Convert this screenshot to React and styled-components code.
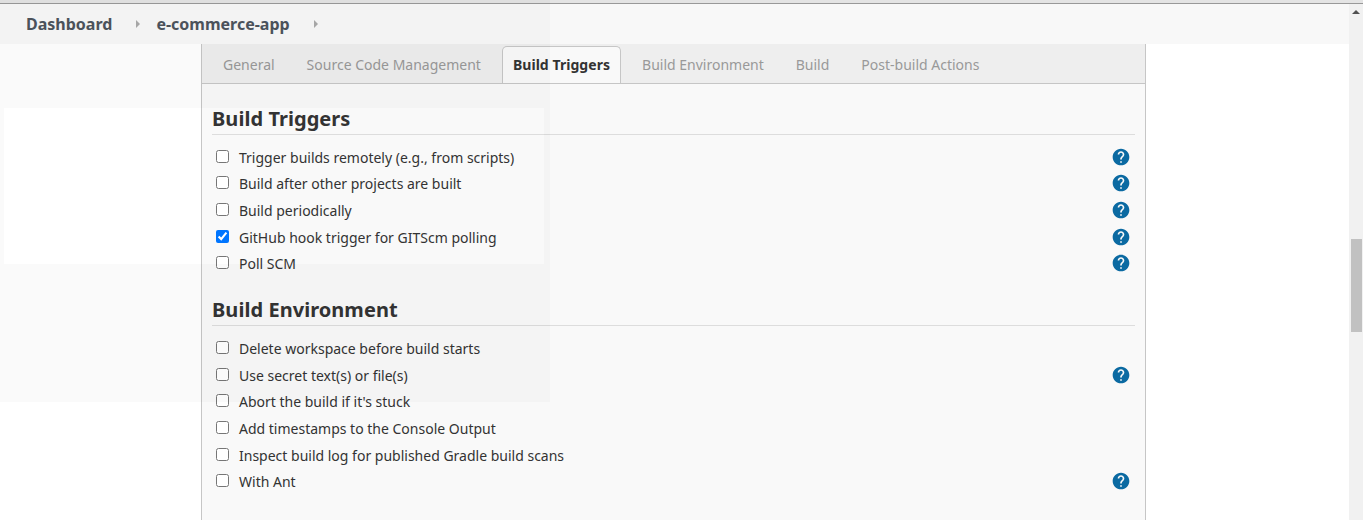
import React from "react";
import styled, { createGlobalStyle } from "styled-components";
import { MdHelp } from "react-icons/md";

const GlobalStyle = createGlobalStyle`
  *, *::before, *::after { box-sizing: border-box; }
  body {
    margin: 0;
    overflow: hidden;
    background: #fff;
    color: #333;
    font-family: "Noto Sans", "Open Sans", sans-serif;
    font-size: 14px;
  }
`;

const Page = styled.div`
  position: relative;
  display: flex;
  flex-direction: column;
  height: 520px;
  overflow: hidden;
`;

const WindowEdge = styled.div`
  flex: none;
  height: 4px;
  background: #e4e4e4;
  border-bottom: 1px solid #999;
`;

const Viewport = styled.div`
  flex: 1;
  display: flex;
  min-height: 0;
`;

const Main = styled.div`
  flex: 1;
  display: flex;
  flex-direction: column;
`;

const Breadcrumbs = styled.nav`
  flex: none;
  display: flex;
  align-items: center;
  height: 40px;
  padding-left: 26px;
  background: #f8f8f8;
`;

const Crumb = styled.span`
  color: #4d545d;
  font-size: 16px;
  font-weight: 700;
  line-height: 22px;
`;

const CrumbArrow = styled.span`
  margin: 0 16px 0 24px;
  border-left: 4px solid #aaa;
  border-top: 4px solid transparent;
  border-bottom: 4px solid transparent;
`;

const ConfigPanel = styled.div`
  flex: 1;
  width: 945px;
  margin-left: 201px;
  background: #f9f9f9;
  border: solid #c6c6c6;
  border-width: 0 1px;
`;

const TabBar = styled.div`
  display: flex;
  align-items: flex-end;
  height: 40px;
  padding-left: 10px;
  background: #eee;
  border-bottom: 1px solid #c6c6c6;
`;

const Tab = styled.div`
  height: 37px;
  margin-right: 10px;
  padding: 0 10px;
  line-height: 35px;
  border: 1px solid transparent;
  border-bottom: 0;
  border-radius: 5px 5px 0 0;
  white-space: nowrap;
  color: ${(p) => (p.$active ? "#333" : "#999")};
  font-weight: ${(p) => (p.$active ? 700 : 400)};
  letter-spacing: ${(p) => (p.$active ? "0.05px" : "normal")};
  background: ${(p) => (p.$active ? "#f9f9f9" : "transparent")};
  border-color: ${(p) => (p.$active ? "#c6c6c6" : "transparent")};
`;

const Section = styled.section`
  padding: 20px 10px 0;
  & + & { padding-top: 18.25px; }
`;

const SectionTitle = styled.h2`
  height: 31px;
  margin: 0 0 8.75px;
  font-size: 20px;
  font-weight: 700;
  line-height: 30px;
  letter-spacing: 0.05px;
  border-bottom: 1px solid #ddd;
`;

const Option = styled.label`
  display: flex;
  align-items: flex-start;
  height: 26.66px;
  padding: 0 4px;
`;

const Checkbox = styled.input`
  flex: none;
  width: 13px;
  height: 13px;
  margin: 6px 10px 0 0;
`;

const OptionText = styled.span`
  flex: 1;
  line-height: 19px;
  padding-top: 4px;
`;

const HelpIcon = styled(MdHelp)`
  width: 20px;
  height: 20px;
  margin-top: 3px;
  color: #0b6aa2;
`;

const ScrollTrack = styled.div`
  flex: none;
  display: flex;
  flex-direction: column;
  align-items: center;
  width: 14px;
  padding-top: 6px;
  background: #f1f1f1;
`;

const ScrollArrow = styled.span`
  border-bottom: 4px solid #505050;
  border-left: 4px solid transparent;
  border-right: 4px solid transparent;
`;

const ScrollThumb = styled.div`
  width: 11px;
  height: 93px;
  margin-top: 225px;
  margin-left: 1px;
  background: #c1c1c1;
`;

/* Fading capture frame with a clear window in its middle. */
const CaptureFrame = styled.div`
  position: absolute;
  top: 0;
  left: 0;
  width: 550px;
  height: 402px;
  border: solid rgba(0, 0, 0, 0.021);
  border-width: 108px 6px 138px 4px;
  pointer-events: none;
`;

const tabs = ["General", "Source Code Management", "Build Triggers", "Build Environment", "Build", "Post-build Actions"];

const sections = [
  {
    title: "Build Triggers",
    options: [
      { text: "Trigger builds remotely (e.g., from scripts)", help: true },
      { text: "Build after other projects are built", help: true },
      { text: "Build periodically", help: true },
      { text: "GitHub hook trigger for GITScm polling", help: true, checked: true },
      { text: "Poll SCM", help: true },
    ],
  },
  {
    title: "Build Environment",
    options: [
      { text: "Delete workspace before build starts" },
      { text: "Use secret text(s) or file(s)", help: true },
      { text: "Abort the build if it's stuck" },
      { text: "Add timestamps to the Console Output" },
      { text: "Inspect build log for published Gradle build scans" },
      { text: "With Ant", help: true },
    ],
  },
];

export default function App() {
  return (
    <Page>
      <GlobalStyle />
      <WindowEdge />
      <Viewport>
        <Main>
          <Breadcrumbs>
            <Crumb>Dashboard</Crumb>
            <CrumbArrow />
            <Crumb>e-commerce-app</Crumb>
            <CrumbArrow />
          </Breadcrumbs>
          <ConfigPanel>
            <TabBar>
              {tabs.map((name) => (
                <Tab key={name} $active={name === "Build Triggers"}>{name}</Tab>
              ))}
            </TabBar>
            {sections.map(({ title, options }) => (
              <Section key={title}>
                <SectionTitle>{title}</SectionTitle>
                {options.map(({ text, help, checked }) => (
                  <Option key={text}>
                    <Checkbox type="checkbox" defaultChecked={checked} />
                    <OptionText>{text}</OptionText>
                    {help && <HelpIcon />}
                  </Option>
                ))}
              </Section>
            ))}
          </ConfigPanel>
        </Main>
        <ScrollTrack>
          <ScrollArrow />
          <ScrollThumb />
        </ScrollTrack>
      </Viewport>
      <CaptureFrame />
    </Page>
  );
}
